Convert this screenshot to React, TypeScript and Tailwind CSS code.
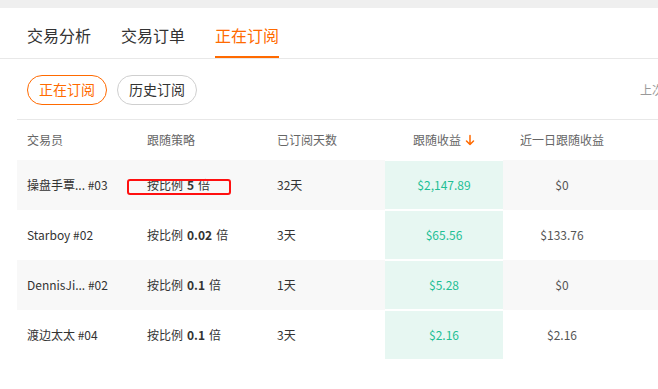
import React from "react";

type Row = {
  name: string;
  ratio: string;
  days: string;
  profit: string;
  recent: string;
  striped: boolean;
};

const rows: Row[] = [
  { name: "操盘手覃... #03", ratio: "5", days: "32天", profit: "$2,147.89", recent: "$0", striped: true },
  { name: "Starboy #02", ratio: "0.02", days: "3天", profit: "$65.56", recent: "$133.76", striped: false },
  { name: "DennisJi... #02", ratio: "0.1", days: "1天", profit: "$5.28", recent: "$0", striped: true },
  { name: "渡边太太 #04", ratio: "0.1", days: "3天", profit: "$2.16", recent: "$2.16", striped: false },
];

const cols = "grid grid-cols-[120px_130px_118px_118px_118px_1fr]";

const App: React.FC = () => {
  return (
    <div className="relative w-full h-[389px] overflow-hidden bg-white font-['Noto_Sans_CJK_SC',sans-serif] whitespace-nowrap">
      <div className="h-[8px] bg-[#efefef]" />

      {/* tabs */}
      <div className="flex gap-[30px] pl-[27px] h-[51px] border-b border-[#e8e8e8]">
        <div className="flex items-center pt-[4px] text-[16px] text-[#333]">交易分析</div>
        <div className="flex items-center pt-[4px] text-[16px] text-[#333]">交易订单</div>
        <div className="flex items-center pt-[6px] text-[16px] text-[#ff6a00] border-b-2 border-[#ff6a00]">
          正在订阅
        </div>
      </div>

      <div className="pl-[17px]">
        {/* sub tabs */}
        <div className="flex items-center h-[61px] pl-[10px] pt-[1px] border-b border-[#e8e8e8]">
          <div className="shrink-0 w-[80px] h-[30px] flex items-center justify-center rounded-full border border-[#ff6a00] text-[14px] text-[#ff6a00]">
            正在订阅
          </div>
          <div className="shrink-0 ml-[10px] w-[80px] h-[30px] flex items-center justify-center rounded-full border border-[#cfcfcf] text-[14px] text-[#333]">
            历史订阅
          </div>
          <div className="shrink-0 ml-[443px] text-[12px] text-[#999]">上次更新</div>
        </div>

        {/* header */}
        <div className={`${cols} h-[40px] items-center text-[12px] text-[#666]`}>
          <div className="pl-[10px]">交易员</div>
          <div className="pl-[10px]">跟随策略</div>
          <div className="pl-[10px]">已订阅天数</div>
          <div className="flex items-center justify-center gap-[4px]">
            跟随收益
            <svg width="10" height="12" viewBox="0 0 10 12" fill="none" stroke="#ff6a00" strokeWidth="1.5" strokeLinecap="round" strokeLinejoin="round">
              <path d="M5 1.5v9M1.5 7l3.5 3.5L8.5 7" />
            </svg>
          </div>
          <div className="text-center">近一日跟随收益</div>
          <div />
        </div>

        {/* rows */}
        {rows.map((r) => (
          <div
            key={r.name}
            className={`${cols} h-[50px] items-stretch text-[12px] text-[#333] ${r.striped ? "bg-[#f8f8f8]" : "bg-white"}`}
          >
            <div className="flex items-center pl-[10px]">{r.name}</div>
            <div className="flex items-center pl-[10px]">
              按比例 <span className="font-bold mx-[4px]">{r.ratio}</span> 倍
            </div>
            <div className="flex items-center pl-[10px]">{r.days}</div>
            <div className="flex items-center justify-center bg-[#e7f7f2] border-y border-white text-[#1fbf95]">
              {r.profit}
            </div>
            <div className="flex items-center justify-center text-[#555]">{r.recent}</div>
            <div />
          </div>
        ))}
      </div>

      {/* annotation box */}
      <div className="absolute left-[127px] top-[179px] w-[104px] h-[16px] border-2 border-[#ff1010] rounded-[3px]" />
    </div>
  );
};

export default App;
